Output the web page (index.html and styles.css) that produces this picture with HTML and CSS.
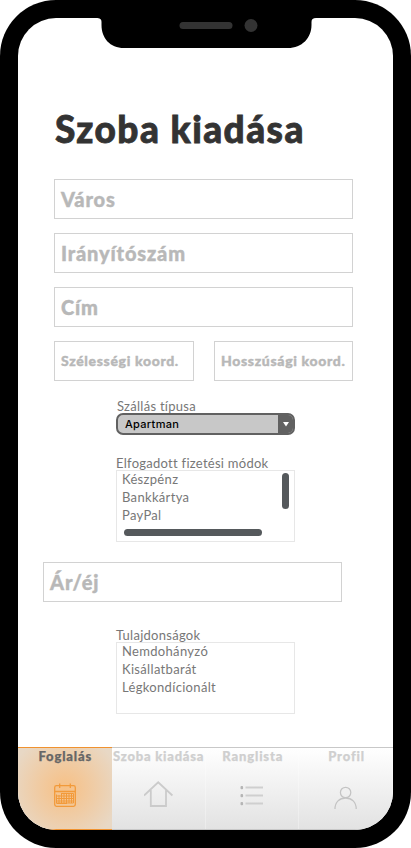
FILE: index.html
```html
<!DOCTYPE html>
<html lang="hu">
<head>
<meta charset="utf-8">
<title>Szoba kiadása</title>
<link rel="stylesheet" href="styles.css">
</head>
<body>
<div class="phone">
  <div class="notch">
    <svg width="220" height="31" viewBox="0 0 220 31">
      <path d="M0 0H220C217 0 215.500 1 215.500 4V7C215.500 20 206 30 192 30H28C14 30 5.500 20 5.500 7V4C5.500 1 4 0 0 0Z" fill="#000"/>
      <rect x="83.500" y="4" width="53" height="7" rx="3.500" fill="#333"/>
      <circle cx="155" cy="7.500" r="6.500" fill="#333"/>
    </svg>
  </div>
  <main class="screen">
    <form class="form">
      <h1 class="title">Szoba kiadása</h1>
      <div class="field">Város</div>
      <div class="field">Irányítószám</div>
      <div class="field">Cím</div>
      <div class="pair">
        <div class="field small">Szélességi koord.</div>
        <div class="field small">Hosszúsági koord.</div>
      </div>
      <section class="group type">
        <div class="label type-label">Szállás típusa</div>
        <div class="select"><span class="value">Apartman</span><span class="arrow"><svg width="6" height="5" viewBox="0 0 6 5"><path d="M0 0H6L3 4.500Z" fill="#fff"/></svg></span></div>
      </section>
      <section class="group pay">
        <div class="label">Elfogadott fizetési módok</div>
        <div class="list">
          <div class="option">Készpénz</div>
          <div class="option">Bankkártya</div>
          <div class="option">PayPal</div>
          <span class="vbar"></span>
          <span class="hbar"></span>
        </div>
      </section>
      <div class="field price">Ár/éj</div>
      <section class="group props">
        <div class="label">Tulajdonságok</div>
        <div class="list">
          <div class="option">Nemdohányzó</div>
          <div class="option">Kisállatbarát</div>
          <div class="option">Légkondícionált</div>
        </div>
      </section>
    </form>
    <nav class="tabs">
      <div class="tab active">
        <span class="name">Foglalás</span>
        <svg class="icon" width="30" height="30" viewBox="0 0 30 30" fill="none" stroke="#f29a3a" stroke-width="1.300">
          <rect x="4.700" y="4.700" width="20.600" height="20.600" rx="1.800"/>
          <path d="M4.700 10.500H25.300M9.700 2.500V7M20.300 2.500V7"/>
          <path stroke-width="1" d="M11 12.500H23.500V22H6.500V13.500M6.500 15H23.500M6.500 17.500H23.500M6.500 20H23.500M6.500 22.500H17M9 14V23M11.500 12V23M14 12V23M16.500 12V23M19 12V22M21.500 12V22"/>
        </svg>
      </div>
      <div class="tab">
        <span class="name wide">Szoba kiadása</span>
        <svg class="icon" width="30" height="30" viewBox="0 0 30 30" fill="none" stroke="#cbcbcb" stroke-width="1.800">
          <path d="M0 14.500L14.200 1.300L28.400 14.500M6.800 9V25H22V9"/>
        </svg>
      </div>
      <div class="tab">
        <span class="name">Ranglista</span>
        <svg class="icon" width="30" height="30" viewBox="0 0 30 30">
          <path d="M8.500 6.500H26M8.500 14.500H26M8.500 22.500H26" stroke="#cfcfcf" stroke-width="1.900"/>
          <g fill="#b5b5b5"><rect x="3.500" y="5" width="2.600" height="3.200" rx="1"/><rect x="3.500" y="13" width="2.600" height="3.200" rx="1"/><rect x="3.500" y="21" width="2.600" height="3.200" rx="1"/></g>
        </svg>
      </div>
      <div class="tab">
        <span class="name">Profil</span>
        <svg class="icon" width="30" height="30" viewBox="0 0 30 30" fill="none" stroke="#c4c4c4" stroke-width="1.300">
          <circle cx="14.600" cy="11.500" r="5.200"/>
          <path d="M4 28C4 21 8.500 17 14.600 17S25.200 21 25.200 28"/>
        </svg>
      </div>
    </nav>
  </main>
</div>
</body>
</html>
```
FILE: styles.css
```css
* { box-sizing: border-box; }
body { margin: 0; background: #fff; font-family: Lato, "Open Sans", sans-serif; font-variant-ligatures: none; }
.phone { position: relative; width: 411px; height: 848px; padding: 18px; background: #000; border-radius: 56px; overflow: hidden; }
.notch { position: absolute; z-index: 1; top: 18px; left: 95.500px; height: 31px; }
.notch svg { display: block; overflow: visible; }
.screen { width: 375px; height: 812px; display: flex; flex-direction: column; background: #fff; border-radius: 38px; overflow: hidden; }
.form { height: 729px; padding: 88px 40px 0 36px; white-space: nowrap; flex: none; }
.title { margin: 0 0 29px; padding-left: 1px; height: 44px; line-height: 45px; font-size: 37px; font-weight: 900; color: #333; letter-spacing: 1.450px; -webkit-text-stroke: .8px #333; }
.field { width: 299px; height: 40px; margin-bottom: 14px; padding-left: 6px; border: 1px solid #d2d2d2; line-height: 38px; font-size: 20px; font-weight: 900; letter-spacing: .850px; color: #b8b8b8; -webkit-text-stroke: .4px #b8b8b8; }
.pair { display: grid; grid-template-columns: 140px 139px; gap: 20px; }
.small { width: auto; margin: 0; font-size: 14px; line-height: 38px; letter-spacing: .660px; }
.group { width: 179px; margin-left: 62px; color: #777; }
.label { height: 14px; line-height: 15px; font-size: 13px; letter-spacing: .270px; }
.type-label { padding-left: 1px; }
.type { margin-top: 18px; }
.pay { margin-top: 21px; }
.select { height: 22px; width: 179px; display: flex; border: 2px solid #616161; border-radius: 7px; background: #c8c8c8; color: #000; overflow: hidden; font: 500 11px/18px Inter, sans-serif; letter-spacing: .3px; }
.value { flex: 1; padding-left: 7px; }
.arrow { width: 15px; background: #616161; display: flex; align-items: center; justify-content: center; }
.list { position: relative; height: 72px; border: 1px solid #e7e7e7; padding-left: 5px; }
.option { height: 18px; line-height: 17px; font-size: 13px; letter-spacing: .320px; }
.vbar { position: absolute; right: 5px; top: 2px; width: 7px; height: 36px; border-radius: 4px; background: #55595c; }
.hbar { position: absolute; left: 7px; bottom: 5px; width: 138px; height: 7px; border-radius: 4px; background: #55595c; }
.price { margin: 20px 0 26px -11px; }
.tabs { height: 83px; display: grid; grid-template-columns: repeat(4, 1fr); grid-template-rows: 83px; background: linear-gradient(#fff, #e2e2e2); flex: none; }
.tab { display: flex; flex-direction: column; align-items: center; border: solid #c8c8c8; border-width: 1px 0; box-shadow: inset -1px 0 rgba(255, 255, 255, .3); white-space: nowrap; }
.active { border-color: #f0922f; box-shadow: none; background: radial-gradient(circle at 50% 50%, #f7c085, #efcda8 50%, #e8d8c5 90%); }
.name { height: 18px; line-height: 17px; font-size: 13px; font-weight: 900; letter-spacing: .850px; margin-right: -.8px; color: #cfcfcf; -webkit-text-stroke: .25px; }
.wide { margin-right: 0; letter-spacing: .780px; }
.active .name { color: #666; }
.icon { margin-top: 15px; }
```
